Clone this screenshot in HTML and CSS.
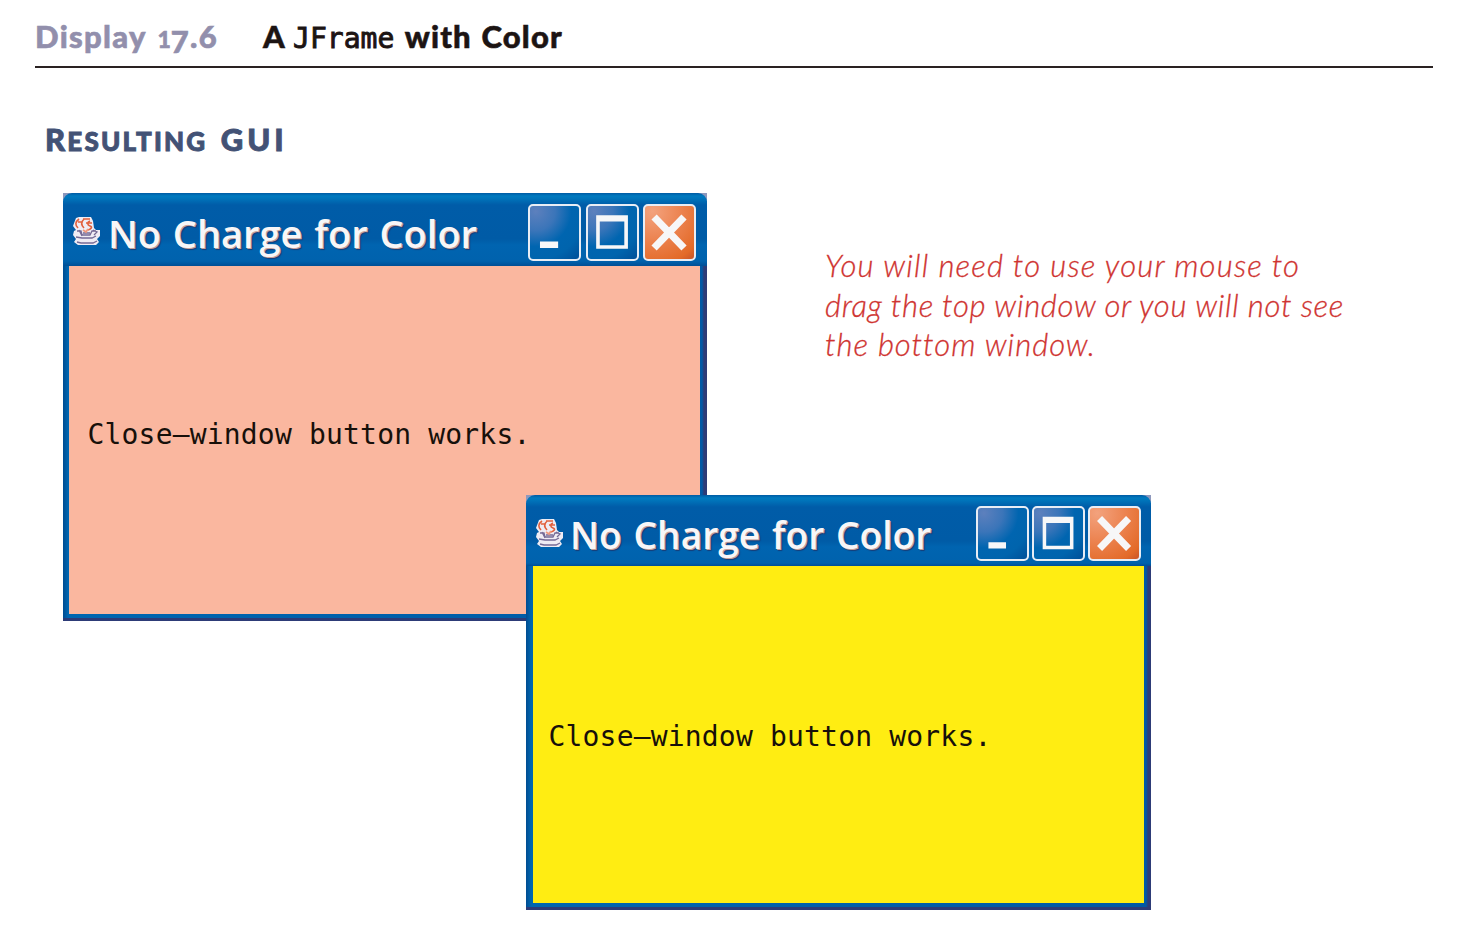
FILE: index.html
```html
<!DOCTYPE html>
<html lang="en">
<head>
<meta charset="utf-8">
<title>Display 17.6</title>
<link rel="stylesheet" href="styles.css">
</head>
<body>
<svg class="defs" width="0" height="0">
  <symbol id="java" viewBox="0 0 27 29">
    <path d="M3 2l3-1h12l2 4 1 7 2 2h4v6l-3 3 2 3-3 3H5l-4-3 2-3-3-4 1-4 2-1-3-4z" fill="#efecf4"/>
    <path d="M6 3c-4 3-4 6-1 9M11 3C8 6 8 9 11 12M10 3h7M17 5c-3 1-3 4 0 5s1 3-2 4M5 6h4M13 7h6" fill="none" stroke="#e2603d" stroke-width="1.6"/>
    <path d="M4 15h4l1 4h8l2-4h4M6 14l3 6M10 17h7M20 14l4 2-3 3M3 21l6 1h10l4-2M4 26l4 1h12l4-2" fill="none" stroke="#756a95" stroke-width="1.3"/>
    <path d="M10 14l3 2 2-3" fill="none" stroke="#f0997c" stroke-width="1.8"/>
  </symbol>
  <symbol id="min" viewBox="0 0 54 58"><path d="M11 39h20v7H11z" fill="#f7f7f8"/></symbol>
  <symbol id="max" viewBox="0 0 54 58"><path fill-rule="evenodd" d="M9 10h35v37H9zM13 17v26h27V17z" fill="#f7f7f8"/></symbol>
  <symbol id="close" viewBox="0 0 54 58"><path d="M10 12l33 34M43 12L10 46" stroke="#f7f7f8" stroke-width="8"/></symbol>
</svg>
<header class="head">
  <span class="num">Display <span class="one">1</span><span class="seven">7</span>.6</span>
  <h1 class="title"><span class="a">A</span> <code>JFrame</code> <span class="rest">with Color</span></h1>
</header>
<h2 class="sub"><span class="cap">R</span>ESULTING <span class="cap gui">GUI</span></h2>
<main class="desk">
  <section class="win first">
    <div class="bar">
      <svg class="java"><use href="#java"/></svg>
      <span class="name">No Charge for Color</span>
      <div class="btns">
        <svg class="btn"><use href="#min"/></svg>
        <svg class="btn"><use href="#max"/></svg>
        <svg class="btn red"><use href="#close"/></svg>
      </div>
    </div>
    <div class="pane pink">Close–window button works.</div>
  </section>
  <section class="win second">
    <div class="bar">
      <svg class="java"><use href="#java"/></svg>
      <span class="name">No Charge for Color</span>
      <div class="btns">
        <svg class="btn"><use href="#min"/></svg>
        <svg class="btn"><use href="#max"/></svg>
        <svg class="btn red"><use href="#close"/></svg>
      </div>
    </div>
    <div class="pane yellow">Close–window button works.</div>
  </section>
  <p class="note"><span class="l1">You will need to use your mouse to</span><br><span class="l2">drag the top window or you will not see</span><br><span class="l3">the bottom window.</span></p>
</main>
</body>
</html>
```

FILE: styles.css
```css
* { box-sizing: border-box; }
body { margin: 0; width: 1469px; height: 933px; background: #fff; position: relative; overflow: hidden; font-family: "Open Sans", sans-serif; }
.defs { position: absolute; }
.head { margin-left: 35px; width: 1398px; height: 68px; padding-top: 15px; border-bottom: 2px solid #2a2222; display: flex; line-height: 42px; white-space: nowrap; }
.num { width: 228px; font: 900 31px/42px Lato, sans-serif; letter-spacing: 1.3px; word-spacing: 3px; color: #928fac; -webkit-text-stroke: .6px #928fac; }
.one { margin-right: -1.5px; font-size: 23px; }
.seven { display: inline-block; transform: translateY(5px); }
.title { margin: 0; font: 900 31px/42px Lato, sans-serif; color: #1c1413; }
.a { -webkit-text-stroke: .5px #1c1413; }
.title code { margin-left: 2px; font: 28px/42px "DejaVu Sans Mono", monospace; -webkit-text-stroke: .9px #1c1413; }
.rest { margin-left: 3px; letter-spacing: 1.2px; word-spacing: 1px; -webkit-text-stroke: .6px #1c1413; }
.sub { margin: 50px 0 0 45px; height: 42px; font: 900 26px/42px Lato, sans-serif; letter-spacing: 2.2px; color: #435275; -webkit-text-stroke: .9px #435275; white-space: nowrap; }
.cap { font-size: 31px; }
.gui { margin-left: 5px; letter-spacing: 4px; }
.win { position: absolute; display: flex; flex-direction: column; background: linear-gradient(#8d98bd, #8d98bd) 0 0 / 100% 8px no-repeat, linear-gradient(90deg, #004c91, #0066b0 5px, #0059a5 calc(100% - 5px), #2d3b77 calc(100% - 3px)); border-bottom: 3px solid #2d3b77; }
.first { left: 63px; top: 193px; width: 644px; height: 428px; padding: 0 7px 4px 6px; }
.second { left: 526px; top: 495px; width: 625px; height: 415px; padding: 0 7px 4px 7px; }
.bar { display: flex; align-items: flex-start; margin: 0 -7px 0 -6px; height: 73px; flex: none; padding: 11px 11px 0 9.5px; border-radius: 9px 9px 0 0; background: linear-gradient(#005ba4, #007abf 3px, #0075bb 5px, #005ca8 12px, #005ba6 46px, #0064b0 52px, #0062ad 68px, #004f96); }
.second .bar { height: 71px; margin-left: -7px; padding-right: 10px; }
.java { width: 27px; height: 29px; margin-top: 12px; }
.name { margin-left: 8.5px; font: 600 38px/59px "Open Sans", sans-serif; letter-spacing: 0; word-spacing: 2px; color: #f7f6f8; text-shadow: 1px 1px 0 #c7a19b, 2px 2px 1px #163d78; white-space: nowrap; }
.second .name { margin-left: 7.5px; font-size: 37px; line-height: 58px; letter-spacing: .1px; }
.btns { display: flex; gap: 4.5px; margin-left: auto; }
.btn { width: 53px; height: 57px; border: 2px solid #e8edf5; border-radius: 5px; background: radial-gradient(circle at 12% 10%, #5d80bd, #3b75b9 30%, #0065b0 55%, #0064ad 75%, #004f98); }
.red { background: radial-gradient(circle at 15% 10%, #f3a27d, #ec8350 45%, #e36a28 85%, #c85428); }
.second .btns { gap: 3px; }
.second .btn { height: 55px; }
.pane { flex: 1; font: 28px/34px "DejaVu Sans Mono", monospace; letter-spacing: .18px; color: #17100a; white-space: nowrap; }
.pink { background: #fab79f; padding: 152px 0 0 18.5px; }
.yellow { background: #ffed12; padding: 154px 0 0 15.5px; }
.note { position: absolute; left: 825px; top: 246px; margin: 0; font: italic 300 31px/39.6px Lato, sans-serif; color: #cf3330; -webkit-text-stroke: .3px #cf3330; white-space: nowrap; }
.l1 { letter-spacing: 1.2px; }
.l2 { letter-spacing: .7px; }
.l3 { letter-spacing: 1px; }
```
